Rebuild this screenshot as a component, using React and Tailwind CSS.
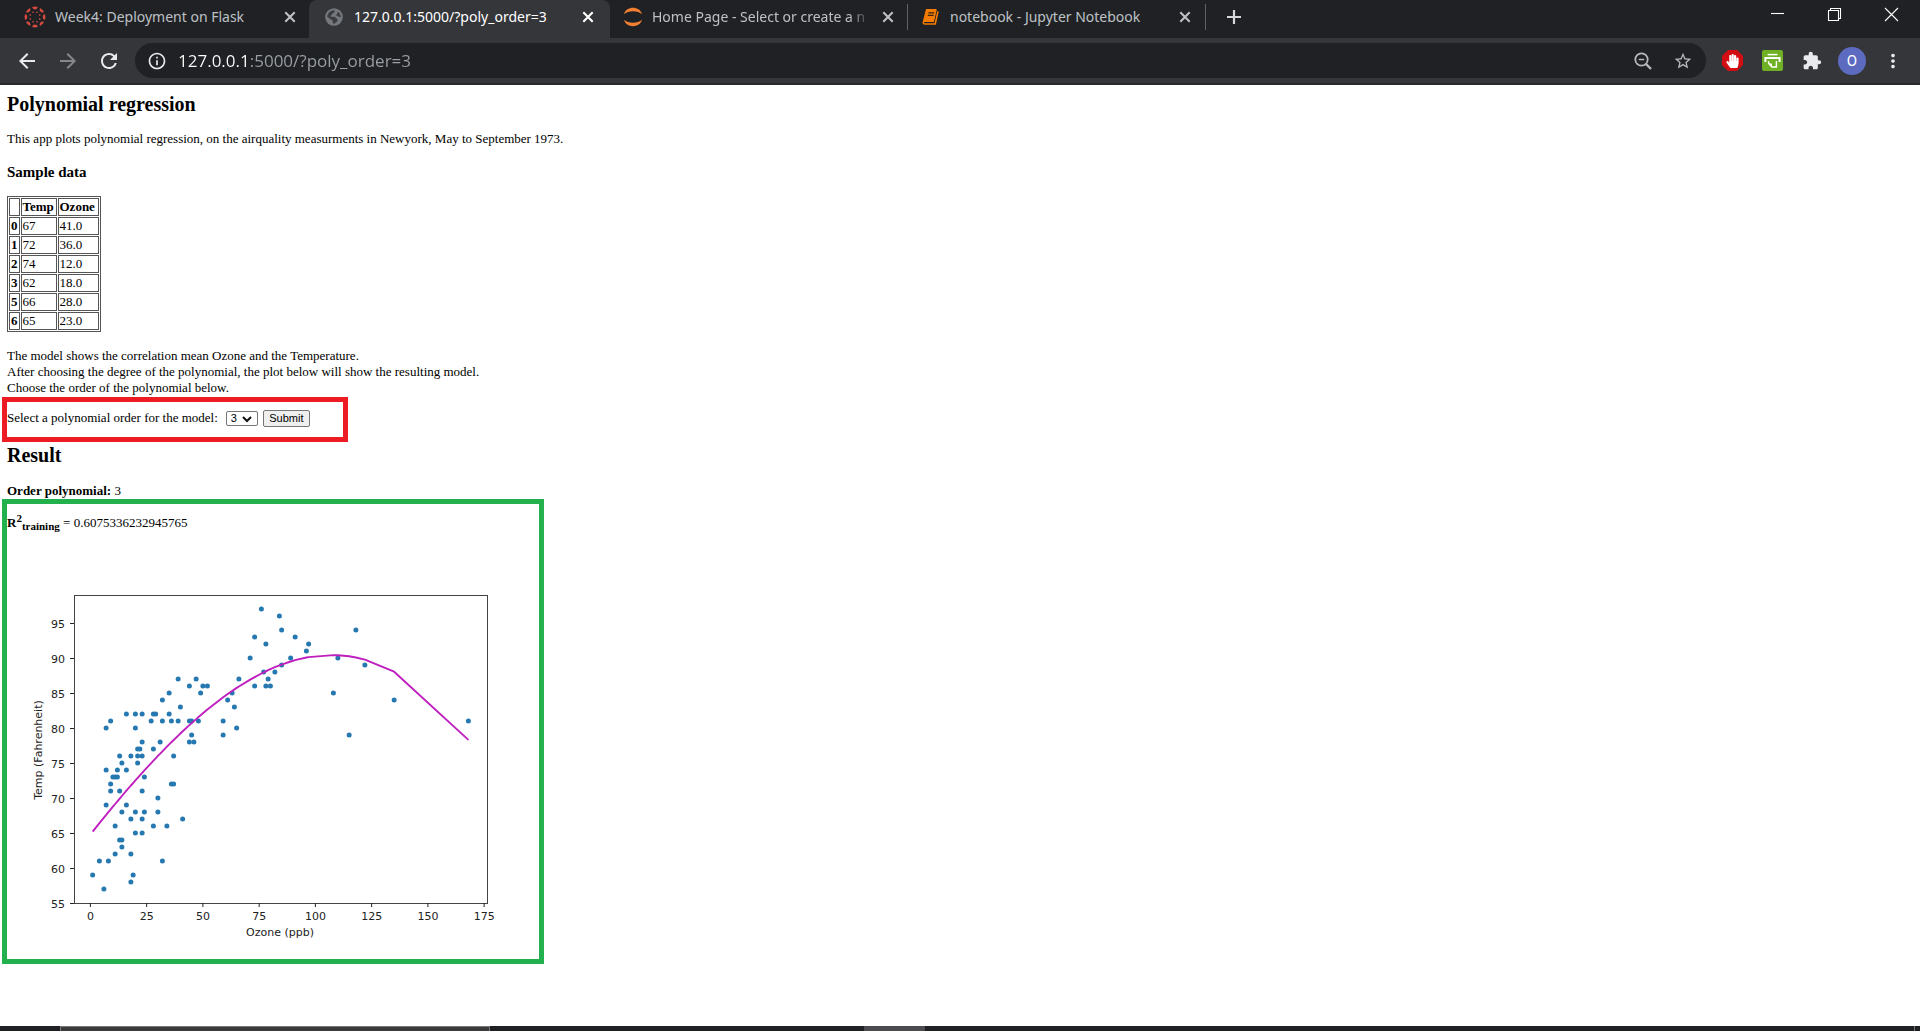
import React from "react";
import {
  MdArrowBack,
  MdArrowForward,
  MdRefresh,
  MdInfoOutline,
  MdStarBorder,
  MdMoreVert,
  MdExtension,
} from "react-icons/md";
import { FaHandPaper } from "react-icons/fa";

const SAMPLE = [
  [0, "67", "41.0"],
  [1, "72", "36.0"],
  [2, "74", "12.0"],
  [3, "62", "18.0"],
  [5, "66", "28.0"],
  [6, "65", "23.0"],
];

// [ozone, temperature] pairs
const POINTS = [
  [41, 67], [36, 72], [12, 74], [18, 62], [28, 66], [23, 65], [19, 59], [8, 61], [7, 74], [16, 69],
  [11, 66], [14, 68], [18, 58], [14, 64], [34, 66], [6, 57], [30, 68], [11, 62], [1, 59], [11, 73],
  [4, 61], [32, 61], [23, 67], [45, 81], [115, 79], [37, 76], [29, 82], [71, 90], [39, 87], [23, 82],
  [21, 77], [37, 72], [20, 65], [12, 73], [13, 76], [135, 84], [49, 85], [32, 81], [64, 83], [40, 83],
  [77, 88], [97, 92], [85, 89], [10, 73], [27, 81], [7, 80], [48, 81], [35, 82], [61, 84], [79, 87],
  [63, 85], [16, 74], [80, 86], [108, 85], [20, 82], [52, 86], [82, 88], [50, 86], [59, 81], [39, 81],
  [9, 81], [16, 82], [78, 86], [35, 85], [66, 87], [122, 89], [89, 90], [110, 90], [44, 86], [28, 82],
  [65, 80], [22, 77], [59, 79], [23, 76], [31, 78], [44, 78], [9, 72], [45, 79], [168, 81], [73, 86],
  [76, 97], [118, 94], [84, 96], [85, 94], [96, 91], [78, 92], [73, 93], [91, 93], [47, 87], [32, 84],
  [20, 80], [23, 78], [21, 75], [24, 73], [44, 81], [21, 76], [28, 77], [9, 71], [13, 71], [46, 78],
  [18, 67], [24, 68], [13, 64], [23, 71], [36, 81], [7, 69], [14, 63], [30, 70], [14, 75], [18, 76],
  [20, 68],
];

const px = (ozone) => 83.4 + ozone * 2.25;
const py = (temp) => 356 - (temp - 55) * 7;

// Third-order model in Newton form
const model = (x) =>
  65.2 + 0.3449 * (x - 1) - 0.0018951 * (x - 1) * (x - 50) - 0.000006259 * (x - 1) * (x - 50) * (x - 110);

const CURVE = [...new Set(POINTS.map((p) => p[0]))]
  .sort((a, b) => a - b)
  .map((x) => `${px(x).toFixed(1)},${py(model(x)).toFixed(1)}`)
  .join(" ");

function CanvasLogo() {
  const turns = [0, 45, 90, 135, 180, 225, 270, 315];
  return (
    <svg viewBox="0 0 22 22" className="h-[22px] w-[22px] shrink-0" fill="#d64a41" aria-hidden="true">
      {turns.map((a) => (
        <g key={a} transform={`rotate(${a} 11 11)`}>
          <path d="M8.1 1 A10.4 10.4 0 0 1 13.9 1 A3 3.2 0 0 1 8.1 1 Z" />
          <circle cx="11" cy="5.9" r="0.8" transform="rotate(22.5 11 11)" />
        </g>
      ))}
    </svg>
  );
}

function Globe() {
  return (
    <svg viewBox="0 0 18 18" className="h-[18px] w-[18px] shrink-0" aria-hidden="true">
      <circle cx="9" cy="9" r="8.8" fill="#75787c" />
      <path d="M2.2 8.8 C2.5 5 5.5 2.4 9 2.2 C10.5 3 9.8 4.6 8.2 5 C6.8 5.4 7.6 7 6 7.2 L5.6 8.8 H9.4 C11 9.2 11.2 11 12.8 11.4 L12 13.4 C11 14.6 9.6 15 9.2 15.9 C7.8 15.9 7.4 14 7.6 12.6 C6.6 11.8 5.6 11.6 4.6 10.6 Z" fill="#3b3d41" />
      <path d="M12.6 3.4 C14.6 4.6 15.8 6.8 15.8 9 C14.6 9.2 13.6 8.4 12 8 C10.8 7.4 11.4 6 12.4 5.4 Z" fill="#3b3d41" />
    </svg>
  );
}

function JupyterLogo() {
  return (
    <svg viewBox="0 0 20 20" className="h-5 w-5 shrink-0" aria-hidden="true">
      <path d="M1 7.2 C3 -1.4 17 -1.4 19 7.2 C15 3.2 5 3.2 1 7.2 Z" fill="#f37f33" />
      <path d="M1 12.8 C3 21.4 17 21.4 19 12.8 C15 16.8 5 16.8 1 12.8 Z" fill="#f37f33" />
    </svg>
  );
}

function NotebookLogo() {
  return (
    <svg viewBox="0 0 18 18" className="h-[18px] w-[18px] shrink-0" aria-hidden="true">
      <path d="M4.6 1.8 H14 L11.4 13.2 H1.6 Z" fill="#f57c00" stroke="#f57c00" strokeWidth="1.4" strokeLinejoin="round" />
      <path d="M16 3.4 L13.2 16 H3 C1.6 16 1 15 1.4 13.6" fill="none" stroke="#f57c00" strokeWidth="1.6" strokeLinejoin="round" />
      <path d="M6.4 4.8 H12.2 M5.8 7.4 H11.6" stroke="#33251a" strokeWidth="1.2" />
    </svg>
  );
}

function Cross({ className }) {
  return (
    <svg viewBox="0 0 16 16" className={className} aria-hidden="true">
      <path d="M3.3 3.3 L12.7 12.7 M12.7 3.3 L3.3 12.7" stroke="currentColor" strokeWidth="2.1" fill="none" />
    </svg>
  );
}

function Tab({ icon, title, active, fade, divider, className }) {
  return (
    <div
      className={`flex items-center pb-1 ${
        active ? "rounded-t-lg bg-[#35363a] text-white" : "text-[#bdc1c6]"
      } ${className}`}
    >
      {icon}
      <button
        type="button"
        className={`min-w-0 flex-1 text-left whitespace-nowrap ${
          fade ? "[mask-image:linear-gradient(to_right,black_90%,transparent)]" : ""
        }`}
      >
        {title}
      </button>
      <button type="button" aria-label="Close tab" className="shrink-0">
        <Cross className="h-4 w-4" />
      </button>
      {divider && <span className="ml-0.5 h-[26px] w-px shrink-0 bg-[#5f6368]" />}
    </div>
  );
}

function TabStrip() {
  return (
    <div className="flex h-[38px] bg-[#202124] font-['Noto_Sans',sans-serif] text-[14px] leading-5">
      <Tab className="w-[309px] gap-[9px] pr-[11px] pl-6" icon={<CanvasLogo />} title="Week4: Deployment on Flask" />
      <Tab
        active
        className="w-[301px] gap-[11px] pr-[14px] pl-4"
        icon={<Globe />}
        title="127.0.0.1:5000/?poly_order=3"
      />
      <Tab fade divider className="w-[298px] gap-[9px] pl-[13px]" icon={<JupyterLogo />} title="Home Page - Select or create a n" />
      <Tab divider className="w-[298px] gap-[10px] pl-[14px]" icon={<NotebookLogo />} title="notebook - Jupyter Notebook" />
      <button type="button" aria-label="New tab" className="ml-5 pb-1 text-[#d5d7da]">
        <svg viewBox="0 0 16 16" className="h-4 w-4" aria-hidden="true">
          <path d="M8 1 V15 M1 8 H15" stroke="currentColor" strokeWidth="2.2" />
        </svg>
      </button>
      <div className="ml-auto flex text-white">
        {[
          ["Minimize", "M1 6.5 H14"],
          ["Restore", "M1.5 3.5 H11.5 V13.5 H1.5 Z M3.5 3 V1.5 H13.5 V11.5 H12"],
          ["Close", "M1 1 L14 14 M14 1 L1 14"],
        ].map(([label, d]) => (
          <button key={label} type="button" aria-label={label} className="flex h-[29px] w-[57px] items-center justify-center">
            <svg viewBox="0 0 15 15" className="h-[15px] w-[15px]" aria-hidden="true">
              <path d={d} stroke="currentColor" fill="none" strokeWidth="1.1" />
            </svg>
          </button>
        ))}
      </div>
    </div>
  );
}

function Toolbar() {
  return (
    <div className="flex h-[47px] items-center border-b-2 border-[#28292b] bg-[#35363a] pr-4 pl-[15px] text-[#e8eaed]">
      <div className="flex w-[120px] shrink-0 gap-[17px]">
        <button type="button" aria-label="Back"><MdArrowBack className="h-6 w-6" /></button>
        <button type="button" aria-label="Forward"><MdArrowForward className="h-6 w-6 text-[#85878a]" /></button>
        <button type="button" aria-label="Reload"><MdRefresh className="h-6 w-6" /></button>
      </div>
      <div className="flex h-[35px] flex-1 items-center rounded-full bg-[#202124] pr-[13px] pl-3">
        <MdInfoOutline className="h-5 w-5 shrink-0" />
        <input
          type="text"
          aria-label="Address"
          defaultValue="127.0.0.1:5000/?poly_order=3"
          className="ml-[11px] min-w-0 flex-1 bg-[linear-gradient(to_right,#ffffff_69px,#9aa0a6_69px)] bg-clip-text font-['Open_Sans',sans-serif] text-[17px] leading-6 text-transparent outline-none"
        />
        <div className="flex shrink-0 gap-5 text-[#b5b8bc]">
          <button type="button" aria-label="Zoom">
            <svg viewBox="0 0 20 20" className="h-5 w-5" fill="none" stroke="currentColor" aria-hidden="true">
              <circle cx="8.5" cy="8.5" r="6.2" strokeWidth="1.8" />
              <path d="M13 13 L18 18" strokeWidth="2.4" />
              <path d="M5.8 8.5 H11.2" strokeWidth="1.5" />
            </svg>
          </button>
          <button type="button" aria-label="Bookmark"><MdStarBorder className="h-5 w-5" /></button>
        </div>
      </div>
      <div className="ml-4 flex shrink-0 items-center gap-[19px]">
        <button type="button" aria-label="Ad blocker">
          <span className="flex h-[21px] w-[21px] items-center justify-center bg-[#d40d12] [clip-path:polygon(29%_0,71%_0,100%_29%,100%_71%,71%_100%,29%_100%,0_71%,0_29%)]">
            <FaHandPaper className="h-[14px] w-[13px] text-white" />
          </span>
        </button>
        <button type="button" aria-label="Print">
          <svg viewBox="0 0 21 21" className="h-[21px] w-[21px]" aria-hidden="true">
            <rect width="21" height="21" rx="2" fill="#6fb025" />
            <path d="M5.6 4.6 H15.4" stroke="#fff" strokeWidth="1.5" />
            <path d="M3.4 12 V8 H17.6 V12" stroke="#fff" strokeWidth="2" fill="none" />
            <path d="M6.6 11 V13.4 L10 17 H14.4 V11" stroke="#fff" strokeWidth="1.4" fill="none" />
            <path d="M6.6 13.4 H10 V17 Z" fill="#fff" />
          </svg>
        </button>
        <button type="button" aria-label="Extensions"><MdExtension className="h-5 w-5" /></button>
        <button
          type="button"
          aria-label="Profile"
          className="-mx-[3px] h-7 w-7 rounded-full bg-[#5c6bc0] font-['Roboto',sans-serif] text-[15px] leading-7 text-white"
        >
          O
        </button>
        <button type="button" aria-label="Menu"><MdMoreVert className="h-[22px] w-[22px]" /></button>
      </div>
    </div>
  );
}

function Chart() {
  return (
    <svg
      viewBox="0 0 533 400"
      className="mt-[15px] block h-[400px] w-[533px] font-['DejaVu_Sans',sans-serif] text-[11px]"
      role="img"
      aria-label="Temperature against ozone with fitted polynomial"
    >
      {POINTS.map(([x, y], i) => (
        <circle key={i} cx={px(x)} cy={py(y)} r="2.5" fill="#2678b0" />
      ))}
      <polyline points={CURVE} fill="none" stroke="#bf1fbf" strokeWidth="1.9" strokeLinejoin="round" />
      <rect x="67.5" y="48.5" width="413" height="308" fill="none" stroke="#444" />
      {[0, 25, 50, 75, 100, 125, 150, 175].map((v) => (
        <g key={v}>
          <path d={`M${px(v)} 356 v4`} stroke="#222" />
          <text x={px(v)} y="373" textAnchor="middle" fill="#222">{v}</text>
        </g>
      ))}
      {[55, 60, 65, 70, 75, 80, 85, 90, 95].map((v) => (
        <g key={v}>
          <path d={`M67 ${py(v) + 0.5} h-4`} stroke="#222" />
          <text x="58" y={py(v) + 5} textAnchor="end" fill="#222">{v}</text>
        </g>
      ))}
      <text x="273" y="389" textAnchor="middle" fill="#222">Ozone (ppb)</text>
      <text transform="translate(35 203) rotate(-90)" textAnchor="middle" fill="#222">Temp (Fahrenheit)</text>
    </svg>
  );
}

function SampleTable() {
  const cell = "h-[18px] border border-[#555] p-px leading-[14px]";
  return (
    <table className="mt-[15px] ml-[7px] border-separate border-spacing-px border border-[#555] text-left">
      <thead>
        <tr>
          <th className={cell} />
          <th scope="col" className={`w-9 ${cell}`}>Temp</th>
          <th scope="col" className={`w-[41px] ${cell}`}>Ozone</th>
        </tr>
      </thead>
      <tbody>
        {SAMPLE.map(([i, t, o]) => (
          <tr key={i}>
            <th scope="row" className={cell}>{i}</th>
            <td className={cell}>{t}</td>
            <td className={cell}>{o}</td>
          </tr>
        ))}
      </tbody>
    </table>
  );
}

export default function App() {
  return (
    <div className="flex min-h-screen flex-col bg-white">
      <header>
        <TabStrip />
        <Toolbar />
      </header>
      <main className="flex-1 font-['Liberation_Serif',serif] text-[13px] leading-4 text-black">
        <h2 className="mt-2 ml-[7px] text-[20px] leading-[22px] font-bold">Polynomial regression</h2>
        <p className="mt-4 ml-[7px]">
          This app plots polynomial regression, on the airquality measurments in Newyork, May to September 1973.
        </p>
        <h3 className="mt-4 ml-[7px] text-[15px] leading-[18px] font-bold">Sample data</h3>
        <SampleTable />
        <p className="mt-4 ml-[7px]">
          The model shows the correlation mean Ozone and the Temperature.
          <br />
          After choosing the degree of the polynomial, the plot below will show the resulting model.
          <br />
          Choose the order of the polynomial below.
        </p>
        <form
          onSubmit={(e) => e.preventDefault()}
          className="mt-px ml-0.5 flex h-[45px] w-[346px] items-center border-[5px] border-[#ed1c24] pb-[3px]"
        >
          <label htmlFor="order" className="whitespace-nowrap">Select a polynomial order for the model:</label>
          <span className="relative ml-2 flex">
            <select
              id="order"
              defaultValue="3"
              className="h-[15px] w-8 appearance-none rounded-[2px] border border-[#767676] bg-white pl-1 font-['Liberation_Sans',sans-serif] text-[11px] leading-3"
            >
              {[1, 2, 3, 4, 5].map((n) => (
                <option key={n}>{n}</option>
              ))}
            </select>
            <svg viewBox="0 0 10 8" className="pointer-events-none absolute top-1 right-1.5 h-2 w-2.5" aria-hidden="true">
              <path d="M1 2 L5 6 L9 2" fill="none" stroke="#111" strokeWidth="2" />
            </svg>
          </span>
          <button
            type="submit"
            className="ml-[5px] h-[17px] w-[47px] rounded-[2px] border border-[#767676] bg-[#efefef] font-['Liberation_Sans',sans-serif] text-[11px] leading-3"
          >
            Submit
          </button>
        </form>
        <h2 className="mt-0.5 ml-[7px] text-[20px] leading-[22px] font-bold">Result</h2>
        <p className="mt-[17px] ml-[7px]">
          <b>Order polynomial:</b> 3
        </p>
        <section className="ml-0.5 w-[542px] border-[5px] border-[#22b14c] pt-2.5 pb-3">
          <p className="leading-[18px]">
            <b>
              R<sup className="text-[11px]">2</sup>
              <sub className="text-[11px]">training</sub>
            </b>{" "}
            = 0.6075336232945765
          </p>
          <Chart />
        </section>
      </main>
      <footer className="flex h-[5px] bg-[#1f2024]">
        <div className="ml-[60px] w-[430px] border-x border-t border-[#777] bg-[#3a3a3a]" />
        <div className="ml-[374px] w-[61px] bg-[#4b4b50]" />
        <div className="mr-[5px] ml-auto w-px bg-[#777]" />
      </footer>
    </div>
  );
}
